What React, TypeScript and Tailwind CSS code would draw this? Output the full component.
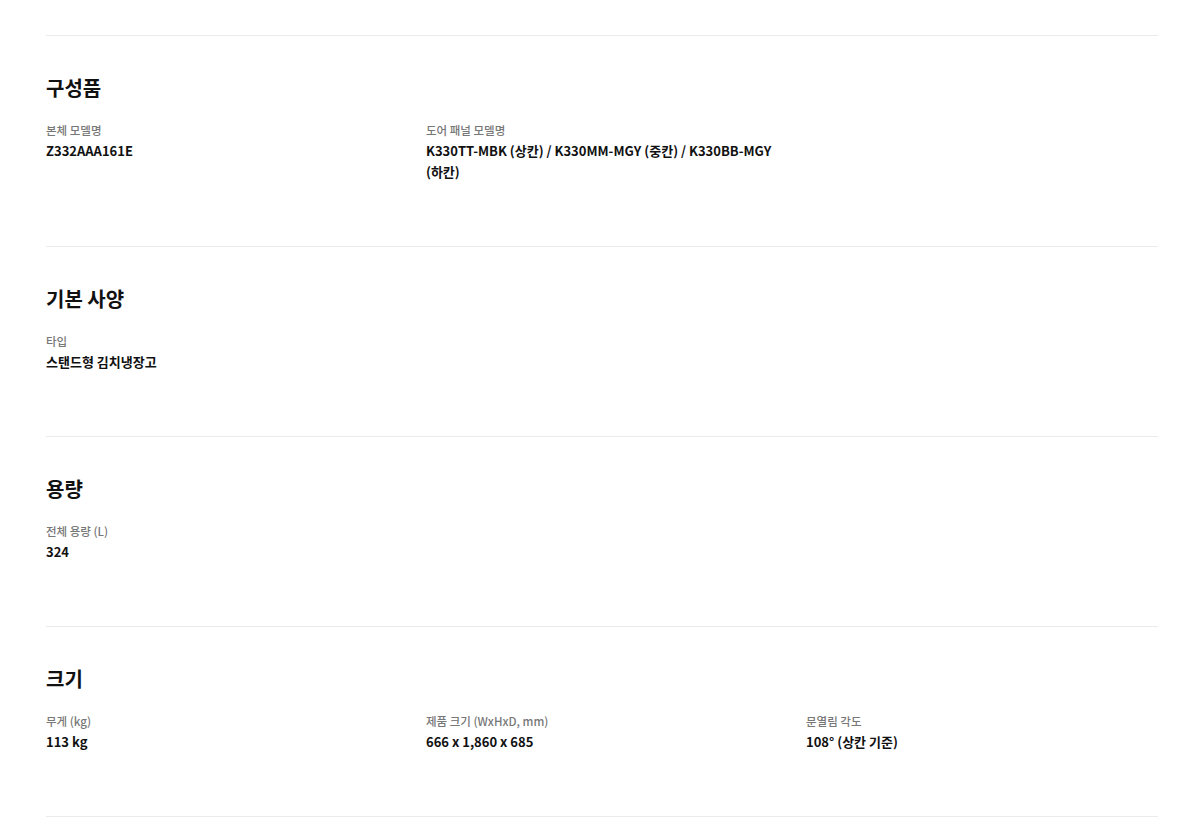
const sections: { title: string; items: { label: string; value: string }[] }[] = [
  {
    title: '구성품',
    items: [
      { label: '본체 모델명', value: 'Z332AAA161E' },
      { label: '도어 패널 모델명', value: 'K330TT-MBK (상칸) / K330MM-MGY (중칸) / K330BB-MGY (하칸)' },
    ],
  },
  {
    title: '기본 사양',
    items: [{ label: '타입', value: '스탠드형 김치냉장고' }],
  },
  {
    title: '용량',
    items: [{ label: '전체 용량 (L)', value: '324' }],
  },
  {
    title: '크기',
    items: [
      { label: '무게 (kg)', value: '113 kg' },
      { label: '제품 크기 (WxHxD, mm)', value: '666 x 1,860 x 685' },
      { label: '문열림 각도', value: '108° (상칸 기준)' },
    ],
  },
]

export default function App() {
  return (
    <div
      className="min-h-[826px] bg-white pl-[46px] pr-[42px] pt-[35px]"
      style={{ fontFamily: '"Noto Sans CJK KR", "Noto Sans", sans-serif' }}
    >
      {sections.map((section) => (
        <section key={section.title} className="border-t border-[#ebebeb] pt-[37px] pb-[64px]">
          <h2 className="text-[20px] leading-[30px] font-bold text-[#111]">{section.title}</h2>
          <div className="mt-[18px] grid grid-cols-3 gap-x-[28px]">
            {section.items.map((item) => (
              <div key={item.label}>
                <p className="text-[11.5px] leading-[19px] font-medium text-[#777]">{item.label}</p>
                <p className="text-[13px] leading-[21px] font-bold text-[#111]">{item.value}</p>
              </div>
            ))}
          </div>
        </section>
      ))}
      <div className="border-t border-[#ebebeb]" />
    </div>
  )
}
